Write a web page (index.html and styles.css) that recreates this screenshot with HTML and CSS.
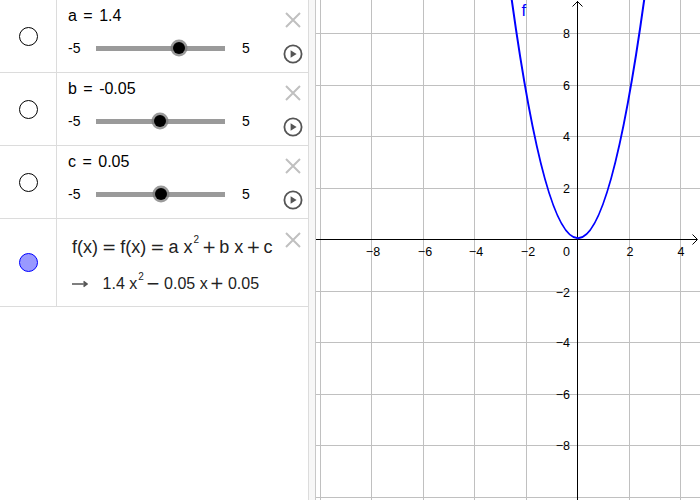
FILE: index.html
```html
<!DOCTYPE html>
<html>
<head>
<meta charset="utf-8">
<link rel="stylesheet" href="styles.css">
</head>
<body>
<div class="app">
  <div class="algebra">
    <div class="row slider-row">
      <div class="marble"><span class="dot"></span></div>
      <div class="content">
        <div class="head">a = 1.4</div>
        <div class="slider">
          <span class="min">-5</span>
          <span class="track"><span class="thumb" style="left:64%"></span></span>
          <span class="max">5</span>
        </div>
      </div>
      <div class="ctrl">
        <svg class="close" width="16" height="16" viewBox="0 0 16 16"><path d="M1 1L15 15M15 1L1 15"/></svg>
        <svg class="play" width="20" height="20" viewBox="0 0 20 20"><circle cx="10" cy="10" r="8.6"/><path d="M7.6 6.2L13.6 10L7.6 13.8Z"/></svg>
      </div>
    </div>
    <div class="row slider-row">
      <div class="marble"><span class="dot"></span></div>
      <div class="content">
        <div class="head">b = -0.05</div>
        <div class="slider">
          <span class="min">-5</span>
          <span class="track"><span class="thumb" style="left:49.5%"></span></span>
          <span class="max">5</span>
        </div>
      </div>
      <div class="ctrl">
        <svg class="close" width="16" height="16" viewBox="0 0 16 16"><path d="M1 1L15 15M15 1L1 15"/></svg>
        <svg class="play" width="20" height="20" viewBox="0 0 20 20"><circle cx="10" cy="10" r="8.6"/><path d="M7.6 6.2L13.6 10L7.6 13.8Z"/></svg>
      </div>
    </div>
    <div class="row slider-row">
      <div class="marble"><span class="dot"></span></div>
      <div class="content">
        <div class="head">c = 0.05</div>
        <div class="slider">
          <span class="min">-5</span>
          <span class="track"><span class="thumb" style="left:50.5%"></span></span>
          <span class="max">5</span>
        </div>
      </div>
      <div class="ctrl">
        <svg class="close" width="16" height="16" viewBox="0 0 16 16"><path d="M1 1L15 15M15 1L1 15"/></svg>
        <svg class="play" width="20" height="20" viewBox="0 0 20 20"><circle cx="10" cy="10" r="8.6"/><path d="M7.6 6.2L13.6 10L7.6 13.8Z"/></svg>
      </div>
    </div>
    <div class="row func-row">
      <div class="marble"><span class="dot filled"></span></div>
      <div class="content func">
        <div class="line l1">f(x)<span class="op rel">=</span>f(x)<span class="op rel">=</span>a x<sup>2</sup><span class="op bin">+</span>b x<span class="op bin">+</span>c</div>
        <div class="line l2"><svg class="arrow" width="16" height="8" viewBox="0 0 16 8"><path d="M0 4H15M11.5 1.5L15 4L11.5 6.5"/></svg>1.4 x<sup>2</sup><span class="op bin2">−</span>0.05 x<span class="op bin2">+</span>0.05</div>
      </div>
      <div class="ctrl ctrl-func">
        <svg class="close" width="16" height="16" viewBox="0 0 16 16"><path d="M1 1L15 15M15 1L1 15"/></svg>
      </div>
    </div>
  </div>
  <div class="splitter"></div>
  <div class="graphics">
    <svg width="385" height="500" viewBox="315 0 385 500">
      <rect x="315" y="0" width="385" height="500" fill="#fff"/>
      <line x1="315.5" y1="0" x2="315.5" y2="500" stroke="#c8c8c8"/>
      <g stroke="#c0c0c0" stroke-width="1">
        <line x1="320.5" y1="0" x2="320.5" y2="500"/>
        <line x1="371.5" y1="0" x2="371.5" y2="500"/>
        <line x1="423.5" y1="0" x2="423.5" y2="500"/>
        <line x1="474.5" y1="0" x2="474.5" y2="500"/>
        <line x1="526.5" y1="0" x2="526.5" y2="500"/>
        <line x1="629.5" y1="0" x2="629.5" y2="500"/>
        <line x1="680.5" y1="0" x2="680.5" y2="500"/>
        <line x1="316" y1="33.5" x2="700" y2="33.5"/>
        <line x1="316" y1="85.5" x2="700" y2="85.5"/>
        <line x1="316" y1="136.5" x2="700" y2="136.5"/>
        <line x1="316" y1="188.5" x2="700" y2="188.5"/>
        <line x1="316" y1="291.5" x2="700" y2="291.5"/>
        <line x1="316" y1="342.5" x2="700" y2="342.5"/>
        <line x1="316" y1="394.5" x2="700" y2="394.5"/>
        <line x1="316" y1="445.5" x2="700" y2="445.5"/>
        <line x1="316" y1="497.5" x2="700" y2="497.5"/>
      </g>
      <g stroke="#000" stroke-width="1" fill="none">
        <line x1="316" y1="239.5" x2="697" y2="239.5"/>
        <line x1="577.5" y1="1" x2="577.5" y2="500"/>
        <path d="M572.5 6.5L577.5 1.5L582.5 6.5"/>
        <path d="M692.5 234.5L697.5 239.5L692.5 244.5"/>
      </g>
      <g class="ticks">
        <text x="373" y="255.5" text-anchor="middle">−8</text>
        <text x="425" y="255.5" text-anchor="middle">−6</text>
        <text x="476" y="255.5" text-anchor="middle">−4</text>
        <text x="528" y="255.5" text-anchor="middle">−2</text>
        <text x="570" y="255.5" text-anchor="end">0</text>
        <text x="630" y="255.5" text-anchor="middle">2</text>
        <text x="681" y="255.5" text-anchor="middle">4</text>
        <text x="570" y="38" text-anchor="end">8</text>
        <text x="570" y="90" text-anchor="end">6</text>
        <text x="570" y="141" text-anchor="end">4</text>
        <text x="570" y="193" text-anchor="end">2</text>
        <text x="570" y="297" text-anchor="end">−2</text>
        <text x="570" y="347" text-anchor="end">−4</text>
        <text x="570" y="399" text-anchor="end">−6</text>
        <text x="570" y="450" text-anchor="end">−8</text>
      </g>
      <path d="M510.55 -8.83 Q578.14 486.62 645.74 -11.54" fill="none" stroke="#0000ff" stroke-width="2"/>
      <text class="flabel" x="521.5" y="16">f</text>
    </svg>
  </div>
</div>
</body>
</html>
```
FILE: styles.css
```css
html, body {
  margin: 0;
  padding: 0;
  background: #fff;
  overflow: hidden;
}
.app {
  display: flex;
  width: 700px;
  height: 500px;
  font-family: "Liberation Sans", Arial, sans-serif;
  color: #000;
}
.algebra {
  width: 308px;
  border-right: 1px solid #dcdcdc;
  display: flex;
  flex-direction: column;
}
.row {
  display: flex;
  border-bottom: 1px solid #dcdcdc;
}
.slider-row {
  height: 72px;
}
.func-row {
  height: 87px;
}
.marble {
  width: 56px;
  border-right: 1px solid #dcdcdc;
  display: flex;
  align-items: center;
  justify-content: center;
}
.dot {
  border: 1px solid #000;
  border-radius: 50%;
  box-sizing: border-box;
  width: 19px;
  height: 19px;
}
.dot.filled {
  background: #9999ff;
  border-color: #0000ff;
}
.content {
  flex: 1;
  padding-left: 11px;
}
.head {
  height: 32px;
  line-height: 32px;
  font-size: 16px;
  word-spacing: 2px;
}
.slider {
  height: 32px;
  display: flex;
  align-items: center;
  font-size: 14px;
}
.min {
  width: 28px;
}
.track {
  position: relative;
  width: 129px;
  height: 5px;
  background: #9a9a9a;
}
.thumb {
  position: absolute;
  top: 50%;
  width: 12px;
  height: 12px;
  margin: -6px 0 0 -6px;
  background: #000;
  border-radius: 50%;
  box-shadow: 0 0 0 2.5px rgba(120, 120, 120, 0.75);
}
.max {
  margin-left: 17px;
}
.ctrl {
  width: 30px;
  display: flex;
  flex-direction: column;
  align-items: center;
  padding-top: 12px;
  box-sizing: border-box;
  gap: 16px;
}
.ctrl-func {
  padding-top: 13px;
}
.close path {
  stroke: #c0c0c0;
  stroke-width: 2;
  fill: none;
}
.play circle {
  fill: none;
  stroke: #555;
  stroke-width: 1.8;
}
.play path {
  fill: #555;
}
.func {
  padding-left: 15px;
  padding-top: 10px;
  color: #222;
}
.func .line {
  height: 36px;
  line-height: 36px;
  white-space: nowrap;
}
.l1 {
  font-size: 18px;
}
.l2 {
  font-size: 16px;
}
.op {
  font-family: "DejaVu Sans", sans-serif;
  font-size: 17px;
}
.op.rel {
  margin: 0 4px;
}
.op.bin {
  margin: 0 3px;
}
.op.bin2 {
  margin: 0 4px 0 2px;
}
.func sup {
  font-size: 10px;
  vertical-align: baseline;
  position: relative;
  top: -10px;
  margin-left: 1px;
}
.l2 sup {
  top: -9px;
}
.arrow {
  margin-right: 14.6px;
  vertical-align: middle;
  position: relative;
  top: -1px;
}
.arrow path {
  stroke: #555;
  stroke-width: 1.6;
  fill: none;
}
.splitter {
  width: 6px;
  background: #f7f7f7;
}
.graphics {
  width: 385px;
  height: 500px;
}
.graphics svg {
  display: block;
}
.ticks text {
  font-family: "Liberation Sans", Arial, sans-serif;
  font-size: 12.5px;
  fill: #000;
}
.flabel {
  font-family: "Liberation Sans", Arial, sans-serif;
  font-size: 16.5px;
  fill: #0000ff;
}
```
